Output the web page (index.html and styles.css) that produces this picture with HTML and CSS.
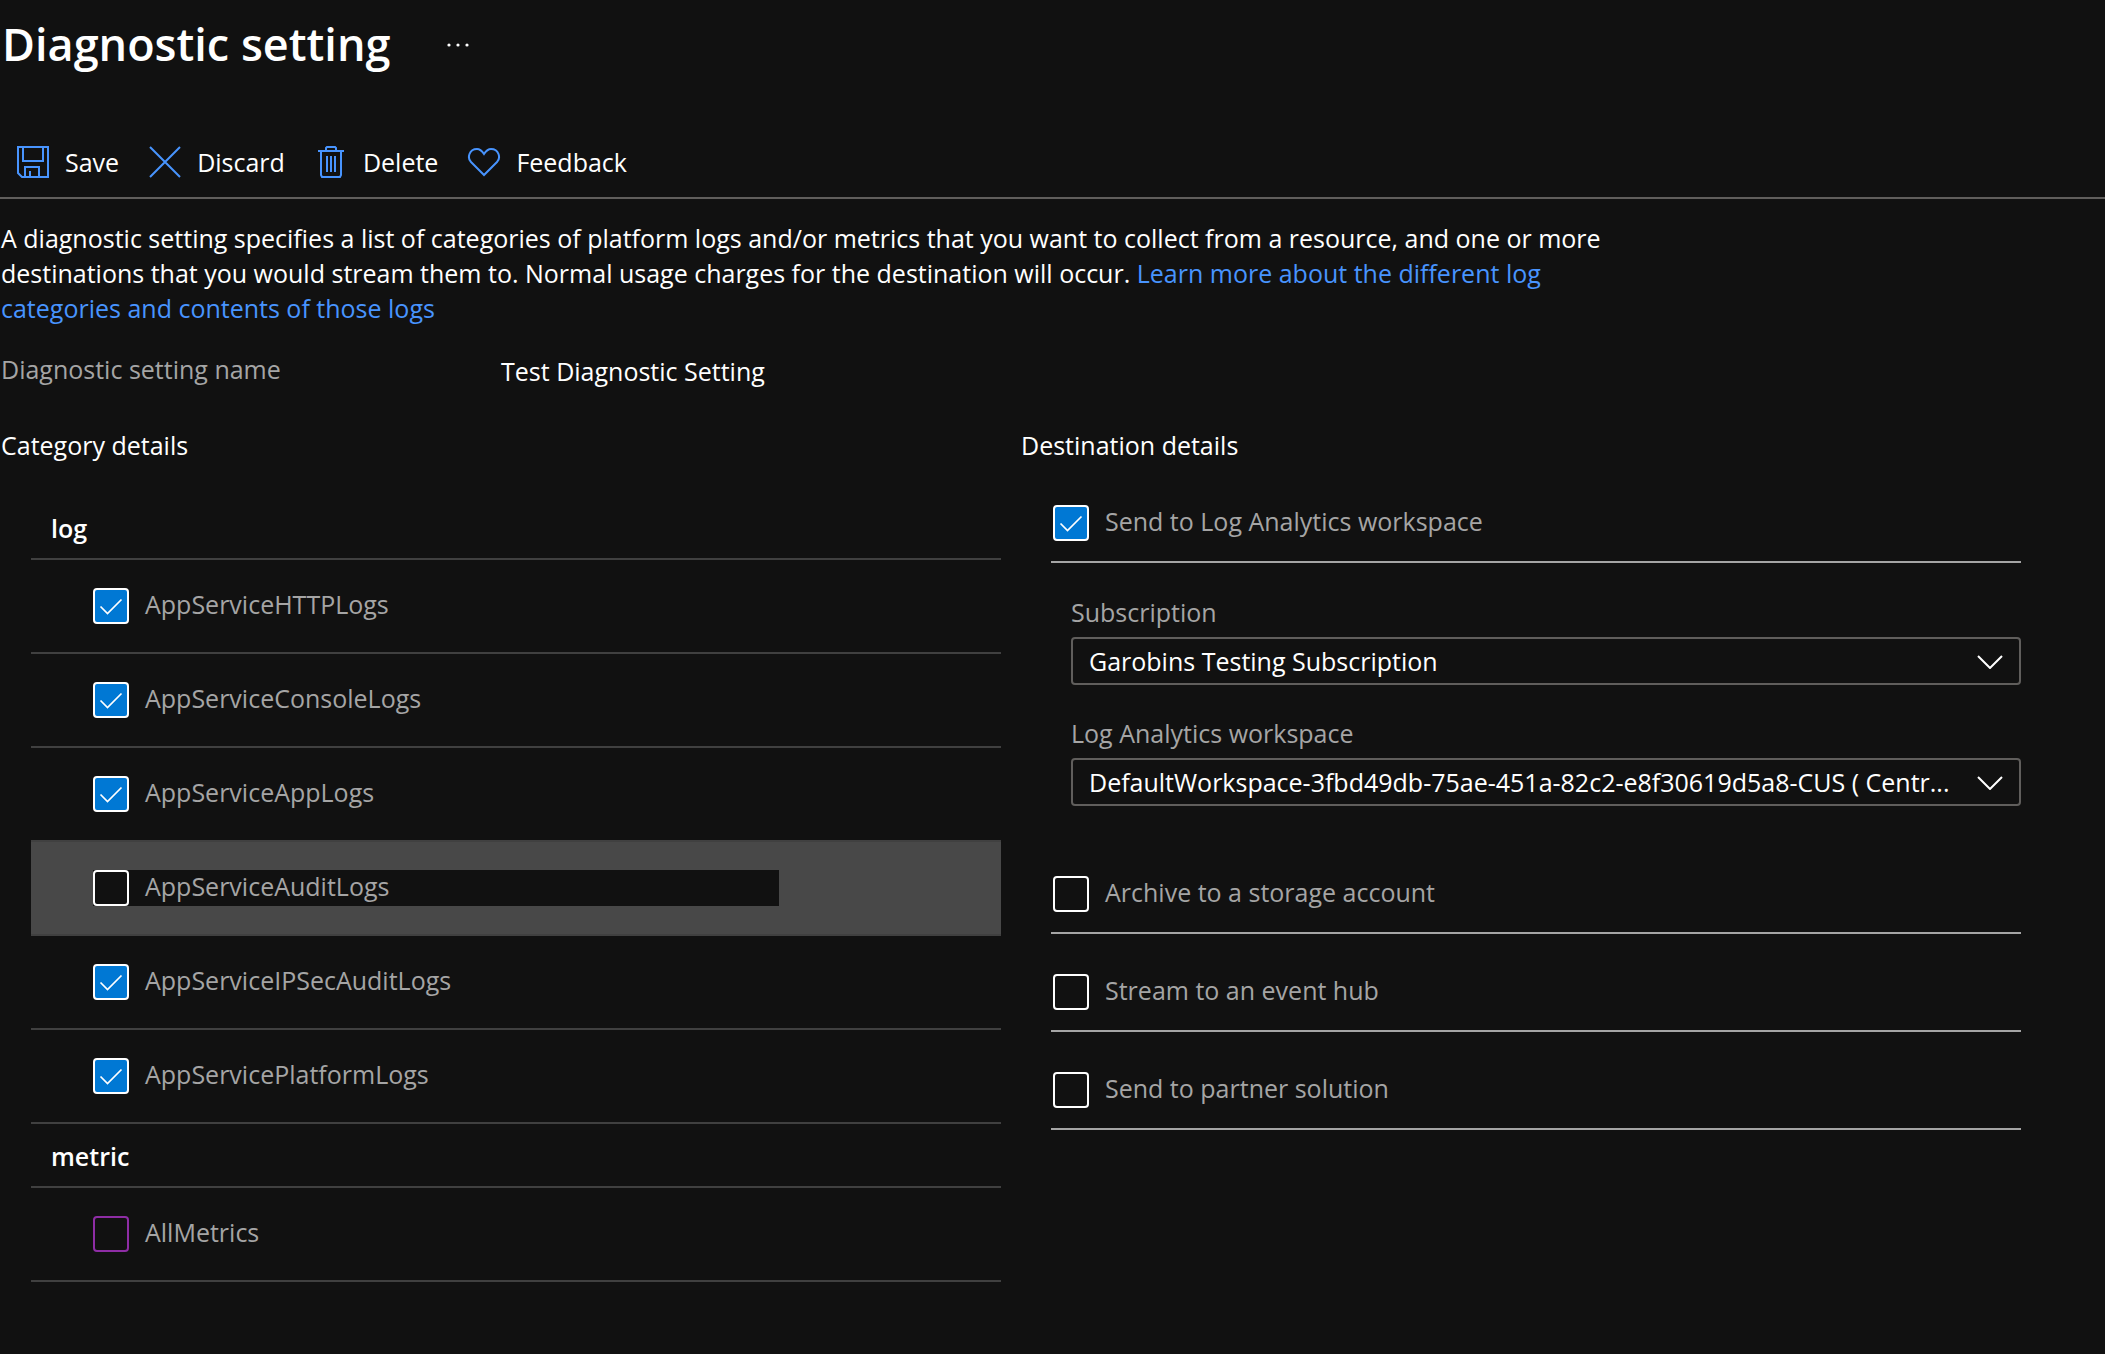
FILE: index.html
```html
<!DOCTYPE html>
<html lang="en">
<head>
<meta charset="utf-8">
<title>Diagnostic setting</title>
<link rel="stylesheet" href="styles.css">
</head>
<body>
<header class="title-bar">
  <h1 class="title">Diagnostic setting</h1>
  <button class="more" type="button" aria-label="More options">
    <svg width="24" height="6" viewBox="0 0 24 6" fill="currentColor"><circle cx="3" cy="3" r="1.6"/><circle cx="12" cy="3" r="1.6"/><circle cx="21" cy="3" r="1.6"/></svg>
  </button>
</header>

<nav class="toolbar">
  <button class="command" type="button">
    <svg class="icon" width="34" height="34" viewBox="0 0 34 34"><path d="M2 2h30v30H6l-4-4zM7 2v14h20V2M9 32V22h14v10M14 32v-6"/></svg>
    <span>Save</span>
  </button>
  <button class="command" type="button">
    <svg class="icon" width="34" height="34" viewBox="0 0 34 34"><path d="M2 2l30 30M32 2L2 32"/></svg>
    <span>Discard</span>
  </button>
  <button class="command" type="button">
    <svg class="icon" width="34" height="34" viewBox="0 0 34 34"><path d="M4 6h26M12 6V3l1-1h8l1 1v3M7 6v24l1 2h18l1-2V6M13 11v16M17 11v16M21 11v16"/></svg>
    <span>Delete</span>
  </button>
  <button class="command" type="button">
    <svg class="icon" width="34" height="34" viewBox="0 0 34 34"><path d="M17 30L4 17C0 13 2 4 10 4c3 0 5 2 7 5 2-3 4-5 7-5 8 0 10 9 6 13z"/></svg>
    <span>Feedback</span>
  </button>
</nav>

<main class="content">
  <p class="intro">A diagnostic setting specifies a list of categories of platform logs and/or metrics that you want to collect from a resource, and one or more destinations that you would stream them to. Normal usage charges for the destination will occur. <a class="link" href="#">Learn more about the different log categories and contents of those logs</a></p>

  <dl class="name-row">
    <dt class="muted">Diagnostic setting name</dt>
    <dd class="name-value">Test Diagnostic Setting</dd>
  </dl>

  <div class="columns">
    <section class="categories">
      <h2 class="heading">Category details</h2>
      <div class="category-list">
        <h3 class="group">log</h3>
        <div class="category"><label class="check"><input class="box" type="checkbox" checked><span>AppServiceHTTPLogs</span></label></div>
        <div class="category"><label class="check"><input class="box" type="checkbox" checked><span>AppServiceConsoleLogs</span></label></div>
        <div class="category"><label class="check"><input class="box" type="checkbox" checked><span>AppServiceAppLogs</span></label></div>
        <div class="category category-active"><label class="check"><input class="box" type="checkbox"><span>AppServiceAuditLogs</span></label></div>
        <div class="category"><label class="check"><input class="box" type="checkbox" checked><span>AppServiceIPSecAuditLogs</span></label></div>
        <div class="category"><label class="check"><input class="box" type="checkbox" checked><span>AppServicePlatformLogs</span></label></div>
        <h3 class="group">metric</h3>
        <div class="category"><label class="check"><input class="box box-changed" type="checkbox"><span>AllMetrics</span></label></div>
      </div>
    </section>

    <section class="destinations">
      <h2 class="heading">Destination details</h2>
      <div class="destination-list">
        <div class="destination"><label class="check"><input class="box" type="checkbox" checked><span>Send to Log Analytics workspace</span></label></div>
        <div class="fields">
          <div class="field">
            <label class="muted" for="subscription">Subscription</label>
            <div class="picker">
              <select class="select" id="subscription"><option>Garobins Testing Subscription</option></select>
              <svg class="chevron" width="26" height="16" viewBox="0 0 26 16"><path d="M1 3l12 12L25 3"/></svg>
            </div>
          </div>
          <div class="field">
            <label class="muted" for="workspace">Log Analytics workspace</label>
            <div class="picker">
              <select class="select" id="workspace"><option>DefaultWorkspace-3fbd49db-75ae-451a-82c2-e8f30619d5a8-CUS ( Centr...</option></select>
              <svg class="chevron" width="26" height="16" viewBox="0 0 26 16"><path d="M1 3l12 12L25 3"/></svg>
            </div>
          </div>
        </div>
        <div class="destination"><label class="check"><input class="box" type="checkbox"><span>Archive to a storage account</span></label></div>
        <div class="destination"><label class="check"><input class="box" type="checkbox"><span>Stream to an event hub</span></label></div>
        <div class="destination"><label class="check"><input class="box" type="checkbox"><span>Send to partner solution</span></label></div>
      </div>
    </section>
  </div>
</main>
</body>
</html>
```
FILE: styles.css
```css
* { box-sizing: border-box; }

body {
  margin: 0;
  background: #111111;
  color: #ffffff;
  font: 25px/35px "Segoe UI", "Open Sans", "Noto Sans", sans-serif;
}

h1, h2, h3, p, dl, dd { margin: 0; }

button {
  border: 0;
  padding: 0;
  background: none;
  color: inherit;
  font: inherit;
}

svg { display: block; flex: none; }

.title-bar {
  display: flex;
  align-items: center;
  gap: 56px;
  height: 90px;
  padding-left: 2px;
}

.title { padding-bottom: 2px; font-size: 45px; line-height: 60px; font-weight: 600; }

.toolbar {
  display: flex;
  align-items: center;
  gap: 29px;
  margin-top: 36px;
  height: 73px;
  padding-left: 16px;
  border-bottom: 2px solid #605e5c;
}

.command { display: flex; align-items: center; gap: 15px; }
.command span { padding-top: 2px; }

.icon { fill: none; stroke: #4894fe; stroke-width: 2; }

.content { padding: 22px 84px 0 1px; }

.intro { max-width: 1600px; }

.link { color: #4894fe; text-decoration: none; }

.muted { color: #a5a5a5; }

.name-row {
  display: grid;
  grid-template-columns: 500px 1fr;
  margin-top: 26px;
}

.name-value { padding-top: 2px; }

.columns {
  display: grid;
  grid-template-columns: 1fr 1fr;
  gap: 20px;
  margin-top: 39px;
}

.heading { font-size: 25px; line-height: 35px; font-weight: 400; }

.category-list { margin: 33px 0 0 30px; }

.group {
  height: 64px;
  padding: 15px 20px 0;
  border-bottom: 2px solid #404040;
  font-size: 25px;
  line-height: 35px;
  font-weight: 600;
}

.category { height: 94px; padding: 28px 222px 0 62px; border-bottom: 2px solid #404040; }

.check { display: flex; align-items: center; gap: 16px; height: 36px; color: #a5a5a5; }
.check span { padding-bottom: 3px; }

.category-active { background: #484848; }
.category-active .check { background: #111111; }

.box {
  appearance: none;
  flex: none;
  width: 36px;
  height: 36px;
  margin: 0;
  border: 2px solid #ffffff;
  border-radius: 4px;
  background: #111111;
}

.box:checked {
  background: #0078d4 url("data:image/svg+xml,%3Csvg xmlns='http://www.w3.org/2000/svg' viewBox='0 0 32 32'%3E%3Cpath d='M5.500 16.500l7 7L26.500 9.500' fill='none' stroke='white' stroke-width='1.700'/%3E%3C/svg%3E") center / 32px 32px no-repeat;
}

.box-changed { border-color: #8e2da5; }

.destination-list { margin: 2px 0 0 30px; }

.destination { height: 98px; padding: 40px 2px 0; border-bottom: 2px solid #a5a5a5; }

.fields { display: grid; gap: 31px; padding: 32px 0 30px 20px; }

.field { display: grid; gap: 7px; }

.picker { display: grid; align-items: center; }
.picker > * { grid-area: 1 / 1; }

.select {
  appearance: none;
  width: 100%;
  height: 48px;
  padding: 0 50px 0 16px;
  border: 2px solid #605e5c;
  border-radius: 4px;
  background: #111111;
  color: inherit;
  font: inherit;
  text-overflow: ellipsis;
}

.chevron {
  justify-self: end;
  margin-right: 18px;
  fill: none;
  stroke: #ffffff;
  stroke-width: 2;
  pointer-events: none;
}
```
